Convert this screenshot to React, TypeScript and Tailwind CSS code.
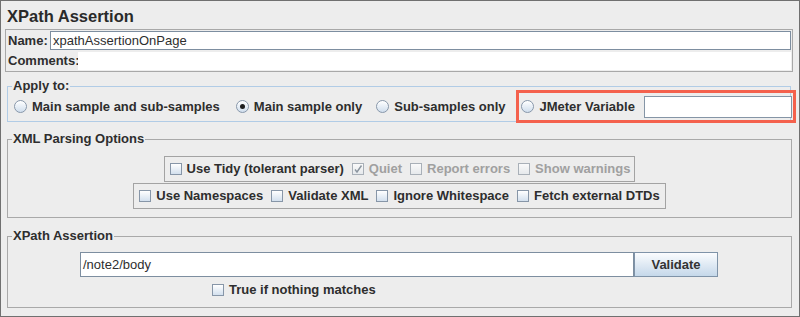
import React from "react";

function Radio({ checked }: { checked?: boolean }) {
  return (
    <span className="w-[13px] h-[13px] shrink-0 rounded-full border border-[#8797aa] bg-linear-to-b from-white to-[#d0deed] flex items-center justify-center shadow-[inset_0_1px_1px_rgba(255,255,255,0.9)]">
      {checked && <span className="w-[5px] h-[5px] rounded-full bg-[#1e1e1e]" />}
    </span>
  );
}

function Check({ checked, disabled }: { checked?: boolean; disabled?: boolean }) {
  return (
    <span
      className={
        disabled
          ? "w-[12px] h-[12px] shrink-0 border border-[#a9b0b8] bg-linear-to-b from-[#fafafa] to-[#e6e9ec] flex items-center justify-center"
          : "w-[12px] h-[12px] shrink-0 border border-[#8796a8] bg-linear-to-b from-white to-[#d3e0ee] flex items-center justify-center"
      }
    >
      {checked && (
        <svg width="10" height="10" viewBox="0 0 10 10">
          <path d="M2 5.5 L4 8 L8.5 1.5" stroke="#8a949e" strokeWidth="1.4" fill="none" />
        </svg>
      )}
    </span>
  );
}

function CheckItem({ label, checked, disabled }: { label: string; checked?: boolean; disabled?: boolean }) {
  return (
    <span className="flex shrink-0 items-center gap-[5px] whitespace-nowrap">
      <Check checked={checked} disabled={disabled} />
      <span className={disabled ? "font-bold text-[#a0a0a0]" : "font-bold"}>{label}</span>
    </span>
  );
}

function RadioItem({ label, checked }: { label: string; checked?: boolean }) {
  return (
    <span className="flex shrink-0 items-center gap-[5px] whitespace-nowrap">
      <Radio checked={checked} />
      <span className="font-bold">{label}</span>
    </span>
  );
}

export default function App() {
  return (
    <div className="w-[800px] h-[317px] bg-[#ededed] border border-[#707070] overflow-hidden font-['Liberation_Sans',Arial,sans-serif] text-[13px] leading-[16px] text-[#2e2e2e]">
      <div className="h-[28px] pl-[6px] pt-[4px] text-[16.5px] font-bold leading-[22px] text-[#2a2a2a]">XPath Assertion</div>

      <div className="ml-[4px] w-[788px] border border-[#a8a8a8] p-[1px] flex flex-col gap-[2px]">
        <div className="h-[19px] flex items-center">
          <span className="w-[43px] pl-[1px] font-bold">Name:</span>
          <div className="flex-1 h-full border border-[#7d8ea0] bg-white pl-[2px] flex items-center">xpathAssertionOnPage</div>
        </div>
        <div className="h-[18px] flex items-center">
          <span className="w-[71px] pl-[1px] font-bold">Comments:</span>
          <div className="flex-1 h-full bg-white" />
        </div>
      </div>

      <div className="relative mt-[14px] ml-[6px] w-[784px] h-[36px] border border-[#b1cce6]">
        <span className="absolute left-[4px] top-[-9px] px-[1px] bg-[#ededed] font-bold">Apply to:</span>
        <div className="mt-[3px] h-[33px] pl-[6px] flex items-center">
          <RadioItem label="Main sample and sub-samples" />
          <span className="w-[16px] shrink-0" />
          <RadioItem label="Main sample only" checked />
          <span className="w-[14px] shrink-0" />
          <RadioItem label="Sub-samples only" />
          <span className="w-[11px] shrink-0" />
          <div className="h-[33px] w-[280px] shrink-0 border-[3px] border-[#f4614d] flex items-center pl-[2px]">
            <RadioItem label="JMeter Variable" />
            <div className="ml-[9px] w-[148px] h-[22px] shrink-0 border border-[#8595a6] bg-white" />
          </div>
        </div>
      </div>

      <div className="relative mt-[17px] ml-[6px] w-[785px] h-[79px] border border-[#a9a9a9]">
        <span className="absolute left-[4px] top-[-9px] px-[1px] bg-[#ededed] font-bold">XML Parsing Options</span>
        <div className="pt-[16px] flex flex-col items-center gap-[1px]">
          <div className="h-[26px] border border-[#a3a3a3] flex items-center gap-[8px] pl-[5px] pr-[4px]">
            <CheckItem label="Use Tidy (tolerant parser)" />
            <CheckItem label="Quiet" checked disabled />
            <CheckItem label="Report errors" disabled />
            <CheckItem label="Show warnings" disabled />
          </div>
          <div className="h-[26px] border border-[#a3a3a3] flex items-center gap-[8px] pl-[5px] pr-[5px]">
            <CheckItem label="Use Namespaces" />
            <CheckItem label="Validate XML" />
            <CheckItem label="Ignore Whitespace" />
            <CheckItem label="Fetch external DTDs" />
          </div>
        </div>
      </div>

      <div className="relative mt-[18px] ml-[6px] w-[785px] h-[72px] border border-[#a9a9a9]">
        <span className="absolute left-[4px] top-[-9px] px-[1px] bg-[#ededed] font-bold">XPath Assertion</span>
        <div className="mt-[15px] ml-[72px] flex">
          <div className="w-[554px] h-[25px] border border-[#7d8ea0] bg-white pl-[2px] flex items-center">/note2/body</div>
          <button className="w-[84px] h-[25px] border border-[#7f93a8] bg-linear-to-b from-[#fbfcfe] to-[#c5d8ea] font-bold text-[#333] flex items-center justify-center">Validate</button>
        </div>
        <div className="mt-[5px] ml-[204px] flex items-center">
          <CheckItem label="True if nothing matches" />
        </div>
      </div>
    </div>
  );
}
